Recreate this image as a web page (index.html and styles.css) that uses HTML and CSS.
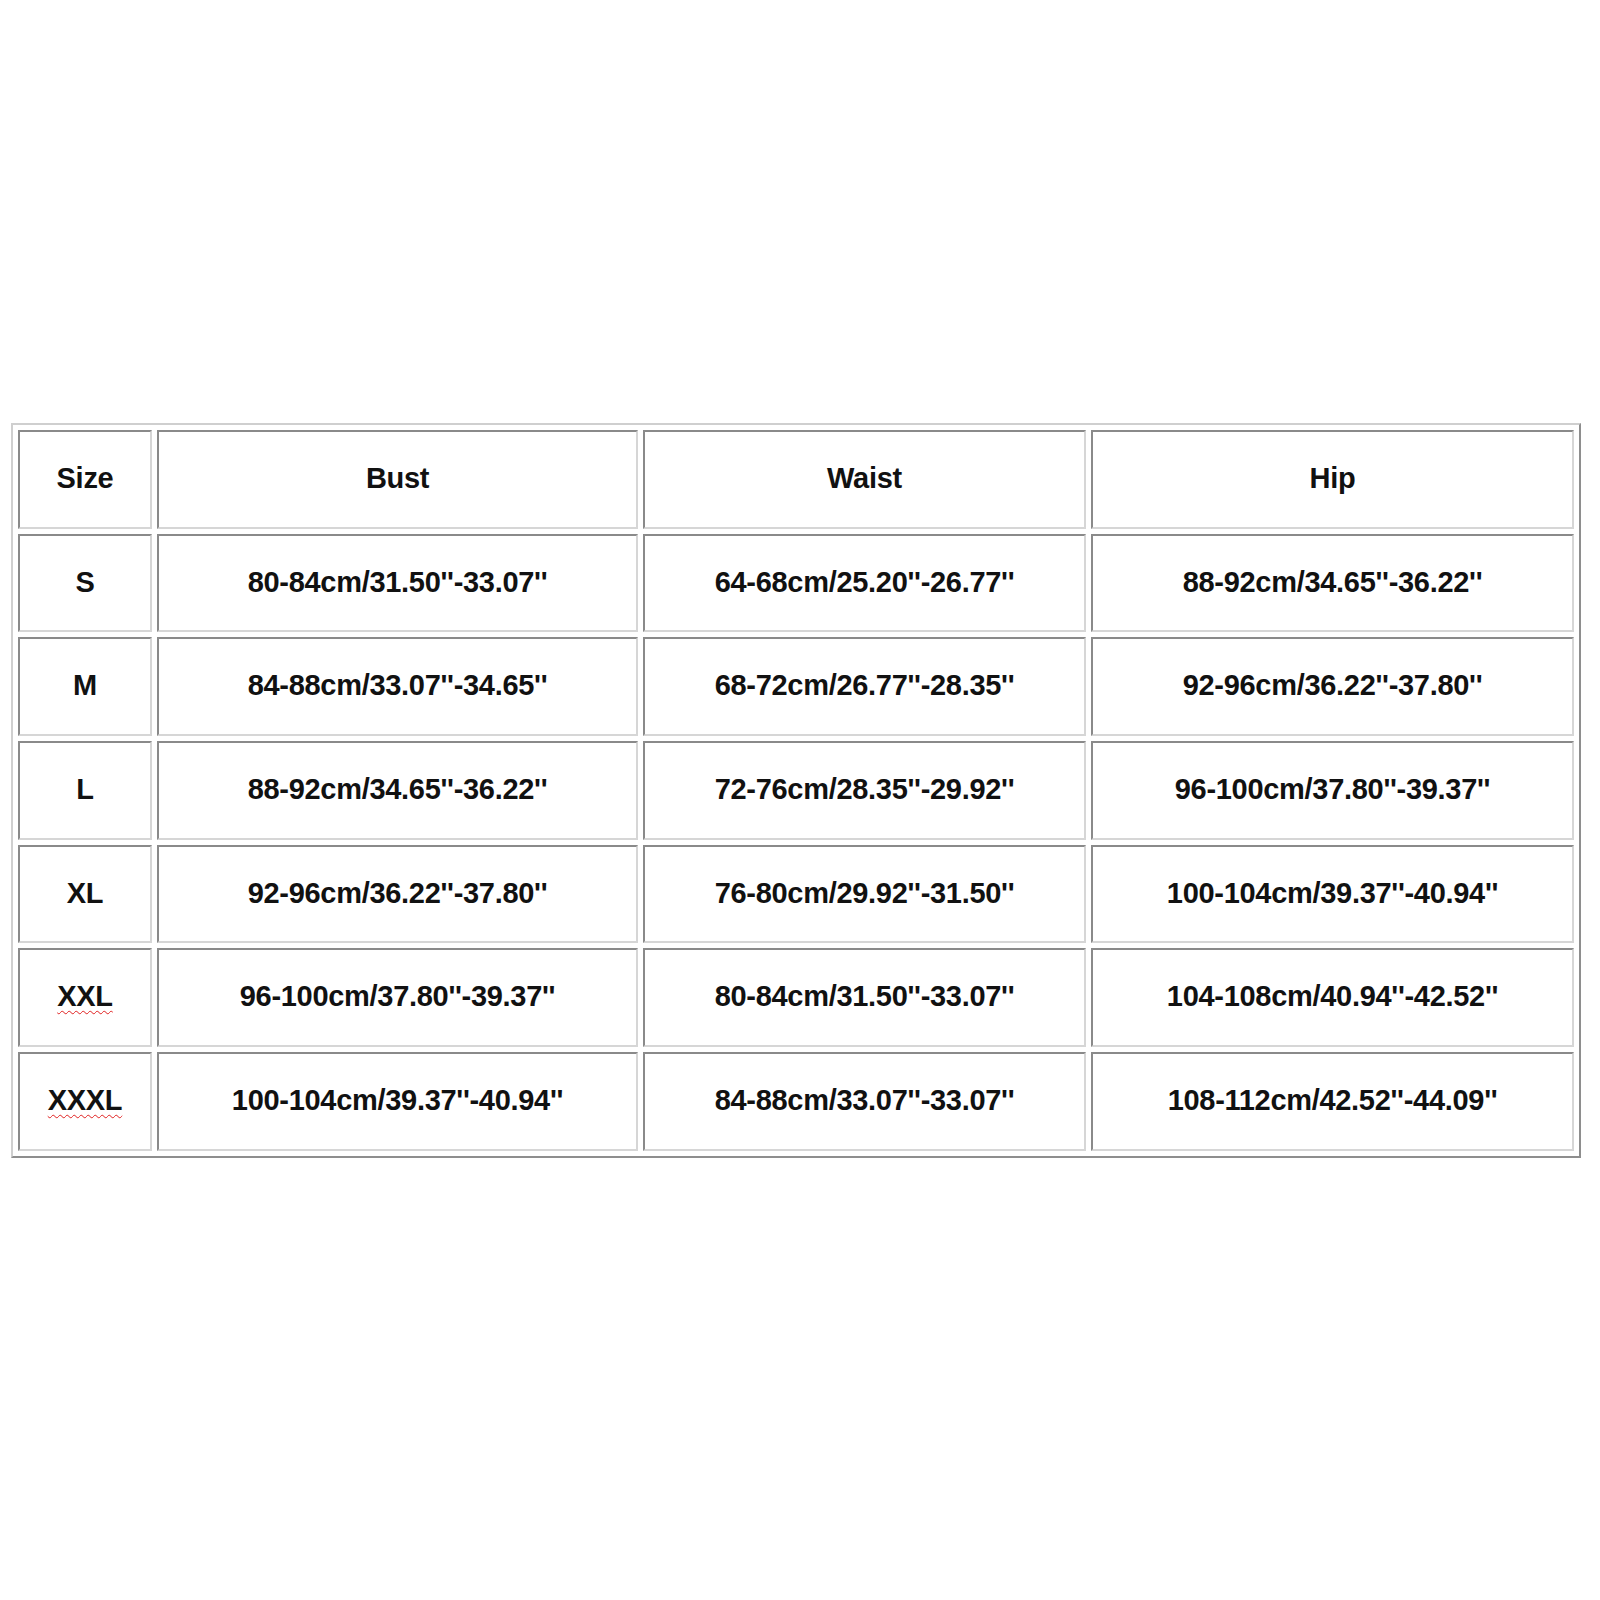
FILE: index.html
```html
<!DOCTYPE html>
<html>
<head>
<meta charset="utf-8">
<link rel="stylesheet" href="styles.css">
</head>
<body>
<table class="size-table">
  <colgroup>
    <col class="c-size">
    <col class="c-bust">
    <col class="c-waist">
    <col class="c-hip">
  </colgroup>
  <tr>
    <td><span class="t">Size</span></td>
    <td><span class="t">Bust</span></td>
    <td><span class="t">Waist</span></td>
    <td><span class="t">Hip</span></td>
  </tr>
  <tr>
    <td><span class="t">S</span></td>
    <td><span class="t">80-84cm/31.50''-33.07''</span></td>
    <td><span class="t">64-68cm/25.20''-26.77''</span></td>
    <td><span class="t">88-92cm/34.65''-36.22''</span></td>
  </tr>
  <tr>
    <td><span class="t">M</span></td>
    <td><span class="t">84-88cm/33.07''-34.65''</span></td>
    <td><span class="t">68-72cm/26.77''-28.35''</span></td>
    <td><span class="t">92-96cm/36.22''-37.80''</span></td>
  </tr>
  <tr>
    <td><span class="t">L</span></td>
    <td><span class="t">88-92cm/34.65''-36.22''</span></td>
    <td><span class="t">72-76cm/28.35''-29.92''</span></td>
    <td><span class="t">96-100cm/37.80''-39.37''</span></td>
  </tr>
  <tr>
    <td><span class="t">XL</span></td>
    <td><span class="t">92-96cm/36.22''-37.80''</span></td>
    <td><span class="t">76-80cm/29.92''-31.50''</span></td>
    <td><span class="t">100-104cm/39.37''-40.94''</span></td>
  </tr>
  <tr>
    <td><span class="t spell">XXL</span></td>
    <td><span class="t">96-100cm/37.80''-39.37''</span></td>
    <td><span class="t">80-84cm/31.50''-33.07''</span></td>
    <td><span class="t">104-108cm/40.94''-42.52''</span></td>
  </tr>
  <tr>
    <td><span class="t spell">XXXL</span></td>
    <td><span class="t">100-104cm/39.37''-40.94''</span></td>
    <td><span class="t">84-88cm/33.07''-33.07''</span></td>
    <td><span class="t">108-112cm/42.52''-44.09''</span></td>
  </tr>
</table>
</body>
</html>
```

FILE: styles.css
```css
html, body {
  margin: 0;
  padding: 0;
  background: #ffffff;
}

body {
  font-family: "Liberation Sans", Arial, sans-serif;
  color: #111111;
}

.size-table {
  margin: 423px 0 0 11px;
  table-layout: fixed;
  border-collapse: separate;
  border-spacing: 5px;
  border-style: solid;
  border-width: 2px;
  border-color: #cfcfcf #8e8e8e #8e8e8e #cfcfcf;
}

.c-size { width: 134px; }
.c-bust { width: 481px; }
.c-waist { width: 443px; }
.c-hip { width: 483px; }

.size-table tr {
  height: 98.7px;
}

.size-table td {
  box-sizing: border-box;
  padding: 0 0 3px 0;
  height: 98.7px;
  text-align: center;
  vertical-align: middle;
  border-style: solid;
  border-width: 2px;
  border-color: #8a8a8a #d6d6d6 #d6d6d6 #8a8a8a;
}

.t {
  display: inline-block;
  font-size: 29px;
  font-weight: bold;
  line-height: 32px;
  letter-spacing: -0.3px;
}

.spell {
  text-decoration: underline wavy #e02020;
  text-decoration-thickness: 1px;
  text-underline-offset: 4px;
}
```
